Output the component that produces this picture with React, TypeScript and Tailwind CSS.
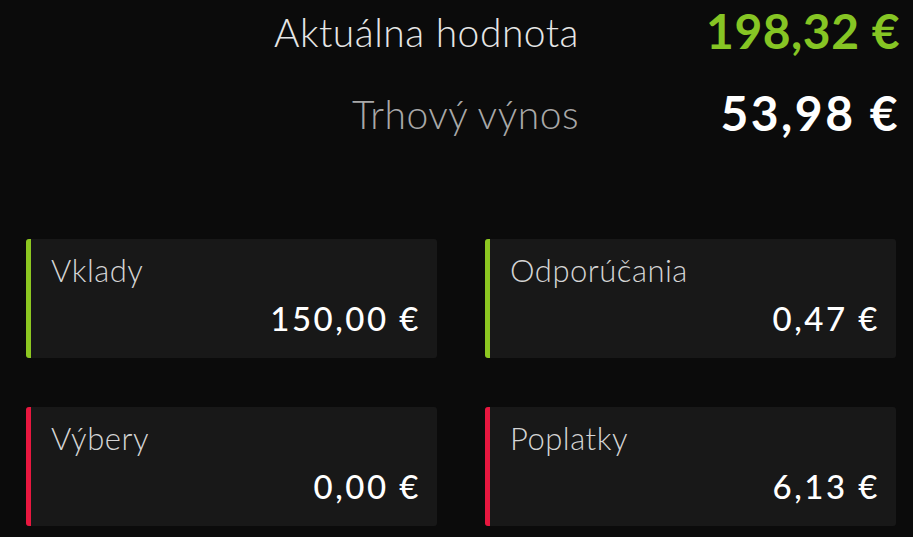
const cards = [
  { label: "Vklady", value: "150,00 €", accent: "bg-[#8dc721]" },
  { label: "Odporúčania", value: "0,47 €", accent: "bg-[#8dc721]" },
  { label: "Výbery", value: "0,00 €", accent: "bg-[#e8173f]" },
  { label: "Poplatky", value: "6,13 €", accent: "bg-[#e8173f]" },
];

function StatCard({ label, value, accent }: { label: string; value: string; accent: string }) {
  return (
    <div className="flex h-[119px] overflow-hidden rounded-[3px] bg-[#181818]">
      <div className={`w-[5px] shrink-0 ${accent}`} />
      <div className="flex flex-1 flex-col pl-[20px] pr-[16px] pt-[13px]">
        <div className="text-[31px] font-light leading-[36px] tracking-[0.5px] text-[#d4d4d4]">{label}</div>
        <div className="mt-[10px] text-right text-[33px] font-medium leading-[40px] tracking-[2.5px] text-white">
          {value}
        </div>
      </div>
    </div>
  );
}

export default function App() {
  return (
    <div
      className="min-h-[537px] w-[913px] bg-[#0b0b0b]"
      style={{ fontFamily: "Lato, 'Noto Sans', sans-serif" }}
    >
      <div className="grid grid-cols-[579px_321px] items-start gap-y-[23px] pt-[2px]">
        <div className="mt-[1px] text-right text-[39px] font-light leading-[58px] tracking-[0.5px] text-[#e6e6e6]">
          Aktuálna hodnota
        </div>
        <div className="text-right text-[48px] font-bold leading-[58px] tracking-[0.5px] text-[#86c524]">198,32 €</div>
        <div className="mt-[1px] text-right text-[39px] font-light leading-[58px] tracking-[0.5px] text-[#a8a8a8]">
          Trhový výnos
        </div>
        <div className="text-right text-[48px] font-bold leading-[58px] tracking-[2.5px] text-white">53,98 €</div>
      </div>
      <div className="grid grid-cols-[411px_411px] gap-x-[48px] gap-y-[49px] pl-[26px] pt-[96px]">
        {cards.map((c) => (
          <StatCard key={c.label} {...c} />
        ))}
      </div>
    </div>
  );
}
